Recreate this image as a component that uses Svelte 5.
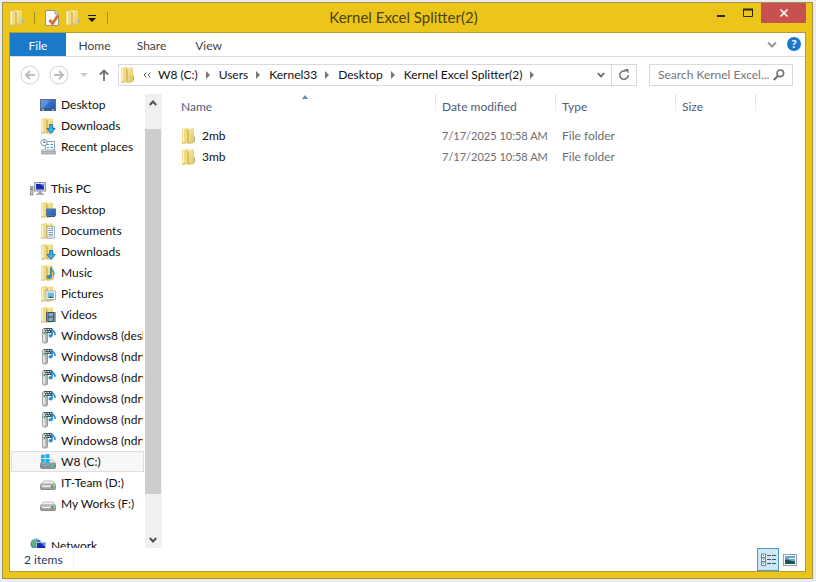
<script>
  const crumbs = ['W8 (C:)', 'Users', 'Kernel33', 'Desktop', 'Kernel Excel Splitter(2)'];
  const nav = [
    { label: 'Desktop', icon: 'screen' },
    { label: 'Downloads', icon: 'downloads' },
    { label: 'Recent places', icon: 'recent' },
    { gap: true },
    { label: 'This PC', icon: 'pc', top: true },
    { label: 'Desktop', icon: 'desktop' },
    { label: 'Documents', icon: 'documents' },
    { label: 'Downloads', icon: 'downloads' },
    { label: 'Music', icon: 'music' },
    { label: 'Pictures', icon: 'pictures' },
    { label: 'Videos', icon: 'videos' },
    { label: 'Windows8 (desk', icon: 'media' },
    { label: 'Windows8 (ndrw', icon: 'media' },
    { label: 'Windows8 (ndrw', icon: 'media' },
    { label: 'Windows8 (ndrw', icon: 'media' },
    { label: 'Windows8 (ndrw', icon: 'media' },
    { label: 'Windows8 (ndrw', icon: 'media' },
    { label: 'W8 (C:)', icon: 'system', selected: true },
    { label: 'IT-Team (D:)', icon: 'drive' },
    { label: 'My Works (F:)', icon: 'drive' },
    { gap: true },
    { label: 'Network', icon: 'network', top: true }
  ];
  const files = [
    { name: '2mb', date: '7/17/2025 10:58 AM', type: 'File folder' },
    { name: '3mb', date: '7/17/2025 10:58 AM', type: 'File folder' }
  ];
</script>

{#snippet folder()}
  <path d="M1 1 7 0v15l-6 .5z" fill="url(#f-left)" />
  <path d="M7 .5h6v7l1 1V13l-1 1.500-6 1z" fill="url(#f-right)" />
  <path d="M5.500 1.500 8 2.500V16l-2.500-1.500z" fill="#dcbf5c" />
  <path d="M5.500 1.500V14.500" stroke="#f3e08c" stroke-width=".8" />
  <path d="M2.500 2v12" stroke="#fff6c8" />
  <path d="M1 15.300 5.500 15M8 15.300l5-.8" stroke="#cdaf55" stroke-width=".7" />
  <path d="M13.500 9.500v3" stroke="#8bafb0" />
{/snippet}

{#snippet drive()}
  <path d="M3.500 6h9.500l2.500 3.500H.5z" fill="#f1f1f2" stroke="#a9abad" stroke-width=".7" />
  <rect x=".5" y="9" width="15" height="5.500" rx="1.500" fill="url(#metal)" stroke="#77797b" stroke-width=".8" />
  <path d="M3 11.500h7" stroke="#f5f5f5" />
  <path d="M12.500 10v3" stroke="#4ba24b" stroke-width="2" />
{/snippet}

{#snippet icon(name)}
  <svg class="icon" viewBox="0 0 16 16" aria-hidden="true">
    {#if name === 'folder'}
      {@render folder()}
    {:else if name === 'screen'}
      <rect x=".5" y="2.500" width="15" height="11" fill="url(#screen)" stroke="#5e7185" />
      <path d="M1 12.500h14" stroke="#234873" />
      <path d="M2 12.500h2M12 12.500h2" stroke="#9fd6f5" />
      <path d="M1 3h9L4 11H1z" fill="#79aef0" opacity=".45" />
    {:else if name === 'downloads'}
      {@render folder()}
      <path d="M9.500 6.500h3v4h2.700L11 15.500 6.800 10.500h2.700z" fill="#36b1ec" stroke="#1c76ad" stroke-width=".9" />
    {:else if name === 'desktop'}
      {@render folder()}
      <rect x="6.500" y="7" width="9" height="6.500" fill="url(#screen)" stroke="#5a7391" />
      <path d="M7 14.500h8" stroke="#31597f" />
    {:else if name === 'documents'}
      {@render folder()}
      <path d="M7 3.500h7.500v11.500H7z" fill="#fff" stroke="#8b9cab" stroke-width=".8" />
      <path d="M8.500 5.500h2M8.500 7.500h4.500M8.500 9.500h4.500M8.500 11.500h4.500M8.500 13h4.500" stroke="#6a8eb0" stroke-width=".9" />
      <path d="M11.500 5.500H13" stroke="#279fe0" stroke-width="2" />
    {:else if name === 'music'}
      {@render folder()}
      <path d="M11 2.500v9" stroke="#226b99" stroke-width="1.500" />
      <ellipse cx="9" cy="12" rx="2.600" ry="2" fill="#328bb9" />
      <path d="M11 2.500c0 3 4 3 3 7.500" fill="none" stroke="#3c9bcc" stroke-width="1.500" />
    {:else if name === 'pictures'}
      {@render folder()}
      <rect x="6" y="5" width="9.500" height="8.500" fill="#fff" stroke="#96a8af" stroke-width=".8" />
      <path d="M7.500 6.500h6.500v5.500H7.500z" fill="#68bce1" />
      <path d="m7.500 12 3-2 3.500 2z" fill="#377b6e" />
    {:else if name === 'videos'}
      {@render folder()}
      <rect x="6" y="5" width="9.500" height="10" fill="#3b464f" />
      <path d="M8.500 6h4.500v3.500H8.500zM8.500 10.500h4.500V14H8.500z" fill="#7aaed0" />
      <path d="M7.200 5.500V15M14.300 5.500V15" stroke="#f0f0e8" stroke-dasharray="1 1" />
    {:else if name === 'recent'}
      <path d="M6 2.500h8.500V11H5z" fill="#f8fbfc" stroke="#8c9da7" />
      <path d="M7 5.500h2M10.500 5.500H13M7 8.500h2M10.500 8.500H13" stroke="#499bc2" />
      <path d="m3 10-1.500 2.500v2.500h14v-2.500L14 10v2.500H3z" fill="#b7c0c6" stroke="#8b969d" stroke-width=".7" />
      <circle cx="4" cy="3.500" r="3.200" fill="#f8fafb" stroke="#8899a4" />
      <path d="M4 1.500v2h1.500" fill="none" stroke="#466679" />
    {:else if name === 'pc'}
      <rect x="4.500" y="1.500" width="11" height="8.500" fill="#d6d9df" stroke="#9296a3" />
      <path d="M6 3h8v5.500H6z" fill="#142bbb" />
      <path d="M10 3h4v3z" fill="#5b83f0" />
      <path d="M8 10h4v2.500h2v1.500H6v-1.500h2z" fill="#a9adb1" />
      <rect x=".5" y="5.500" width="2.500" height="8.500" fill="#c7c9cc" stroke="#85888c" stroke-width=".8" />
      <path d="M1.800 7v2" stroke="#337a46" />
    {:else if name === 'network'}
      <circle cx="6" cy="6" r="5.500" fill="#3385ca" />
      <path d="M1 4c2 0 2-3 5-3l1 2-2 2 1 2-2 3-2-3z" fill="#65b875" />
      <path d="M3 1.500c2-1 4-1 6 0" fill="none" stroke="#b9e5f2" />
      <rect x="6.500" y="4.500" width="9" height="7" fill="#172cb2" stroke="#b7bfd4" />
      <path d="M11 5h4v4z" fill="#5986e7" />
      <path d="M9 13h4" stroke="#989fad" stroke-width="2" />
    {:else if name === 'media'}
      <rect x="2.500" y=".5" width="5" height="14.500" rx="1.500" fill="url(#tower)" stroke="#8b8e90" stroke-width=".8" />
      <path d="M4 7v6" stroke="#f7f7f7" />
      <path d="M4.500 4v2" stroke="#4b994e" stroke-width="1.500" />
      <path d="M4 0h8v5H6z" fill="#3b5361" />
      <path d="M5 1.500h6M6 3.500h5" stroke="#d3edf5" stroke-dasharray="1.500 1" />
      <path d="M12 .5v7" stroke="#2a83bd" stroke-width="1.600" />
      <ellipse cx="10.600" cy="7.800" rx="2.100" ry="1.700" fill="#2b93d2" />
      <path d="M12.500 1.500c0 2 3.500 2 2.300 5.500" fill="none" stroke="#2590d4" stroke-width="1.600" />
    {:else if name === 'drive'}
      {@render drive()}
    {:else if name === 'system'}
      {@render drive()}
      <path d="M.5 9.500h15v4H.5z" fill="#527f9b" opacity=".65" />
      <path d="M12.500 10v3" stroke="#61cf69" stroke-width="2" />
      <path d="m1 .8 3.700-.4v3.800H1zM5.500.3 9.500 0v4.200h-4zM1 5h3.700v3.800L1 8.400zM5.500 5h4v4.300l-4-.4z" fill="#20aee5" />
    {/if}
  </svg>
{/snippet}

<svg class="defs" width="0" height="0" aria-hidden="true">
  <defs>
    <linearGradient id="f-left"><stop stop-color="#f3e093" /><stop offset="1" stop-color="#ebd47c" /></linearGradient>
    <linearGradient id="f-right" x2="1" y2="1"><stop stop-color="#f8eaa6" /><stop offset="1" stop-color="#dfc158" /></linearGradient>
    <linearGradient id="metal" x2="0" y2="1"><stop stop-color="#e2e3e4" /><stop offset="1" stop-color="#8d9194" /></linearGradient>
    <linearGradient id="tower" x2="1" y2="0"><stop stop-color="#e4e5e6" /><stop offset="1" stop-color="#a2a5a8" /></linearGradient>
    <linearGradient id="screen" x2="1" y2="1"><stop stop-color="#4f8bdb" /><stop offset="1" stop-color="#1e50a9" /></linearGradient>
  </defs>
</svg>

<div class="page">
  <div class="window">
    <header class="titlebar">
      <div class="quick">
        {@render icon('folder')}
        <i class="bar"></i>
        <button aria-label="Properties">
          <svg class="icon" viewBox="0 0 16 16">
            <path d="M1.500.5H11L14.500 4v11.500h-13z" fill="#fbfbfb" stroke="#999579" />
            <path d="M11 .5V4h3.500" fill="#ddd" stroke="#999579" />
            <path d="m5.500 10 3 3.500L14 5.500" fill="none" stroke="#dc6940" stroke-width="2.800" />
          </svg>
        </button>
        <button aria-label="New folder">{@render icon('folder')}</button>
        <button class="more" aria-label="Customize Quick Access Toolbar">
          <svg width="8" height="8" viewBox="0 0 8 8"><path d="M0 1h8v1H0z" fill="#111" /><path d="M0 4h8L4 8z" fill="#111" /></svg>
        </button>
        <i class="bar"></i>
      </div>
      <h1>Kernel Excel Splitter(2)</h1>
      <div class="controls">
        <button aria-label="Minimize"><svg width="12" height="12" viewBox="0 0 12 12"><path d="M2 8h8v2H2z" fill="#2b2508" /></svg></button>
        <button aria-label="Maximize"><svg width="12" height="12" viewBox="0 0 12 12"><path d="M1.500 2.500h9v7h-9z" fill="none" stroke="#2b2508" /><path d="M1 2.500h10" stroke="#2b2508" stroke-width="2" /></svg></button>
        <button class="close" aria-label="Close"><svg width="10" height="10" viewBox="0 0 10 10"><path d="m1.500 1.500 7 7m0-7-7 7" stroke="#fff" stroke-width="1.700" /></svg></button>
      </div>
    </header>

    <div class="client">
      <nav class="tabs" aria-label="Ribbon">
        <button class="file">File</button>
        <button>Home</button>
        <button>Share</button>
        <button>View</button>
        <span class="fill"></span>
        <button class="plain" aria-label="Expand the Ribbon"><svg width="10" height="8" viewBox="0 0 10 8"><path d="m1 1.500 4 4 4-4" fill="none" stroke="#999" stroke-width="2" /></svg></button>
        <button class="plain help" aria-label="Help">?</button>
      </nav>

      <div class="addressbar">
        <div class="history">
          <button aria-label="Back"><svg width="20" height="20" viewBox="0 0 20 20"><circle cx="10" cy="10" r="9" fill="none" stroke="#cfcfcf" /><path d="M15 10H6m4-4-4 4 4 4" fill="none" stroke="#bcbcbc" stroke-width="2" /></svg></button>
          <button aria-label="Forward"><svg width="20" height="20" viewBox="0 0 20 20"><circle cx="10" cy="10" r="9" fill="none" stroke="#cfcfcf" /><path d="M5 10h9m-4-4 4 4-4 4" fill="none" stroke="#bcbcbc" stroke-width="2" /></svg></button>
          <button class="recent" aria-label="Recent locations"><svg width="8" height="4" viewBox="0 0 8 4"><path d="M0 0h8L4 4z" fill="#ccc" /></svg></button>
          <button aria-label="Up"><svg width="10" height="12" viewBox="0 0 10 12"><path d="M5 12V2M1 5.500l4-4 4 4" fill="none" stroke="#6e6e6e" stroke-width="1.800" /></svg></button>
        </div>
        <div class="path">
          {@render icon('folder')}
          <button class="chev" aria-label="Parent folders"><svg width="8" height="6" viewBox="0 0 8 6"><path d="M3.500.5 1 3l2.500 2.500M7.500.5 5 3l2.500 2.500" fill="none" stroke="#666" /></svg></button>
          {#each crumbs as crumb}
            <a href="#path">{crumb}</a>
            <svg class="sep" width="4" height="8" viewBox="0 0 4 8"><path d="M0 0v8l4-4z" fill="#777" /></svg>
          {/each}
          <span class="fill"></span>
          <button class="drop" aria-label="Previous locations"><svg width="8" height="7" viewBox="0 0 8 7"><path d="m.8 1 3.200 3.500L7.200 1" fill="none" stroke="#666" stroke-width="1.800" /></svg></button>
          <button class="refresh" aria-label="Refresh"><svg width="12" height="12" viewBox="0 0 12 12"><path d="M7.500 2.200A4.200 4.200 0 1 0 10.200 6" fill="none" stroke="#777" stroke-width="1.600" /><path d="M6 0h4.500v4.500z" fill="#777" /></svg></button>
        </div>
        <label class="search">
          <input type="text" placeholder="Search Kernel Excel..." aria-label="Search Kernel Excel Splitter(2)" />
          <svg width="12" height="12" viewBox="0 0 12 12"><circle cx="7.300" cy="4.300" r="3.300" fill="none" stroke="#6d6d6d" stroke-width="1.600" /><path d="M5 6.800.8 11" stroke="#6d6d6d" stroke-width="2" /></svg>
        </label>
      </div>

      <div class="body">
        <aside>
          <nav class="tree" aria-label="Navigation pane">
            {#each nav as item}
              {#if item.gap}
                <div class="gap"></div>
              {:else}
                <a href="#item" class:top={item.top} class:selected={item.selected}>
                  {@render icon(item.icon)}<span>{item.label}</span>
                </a>
              {/if}
            {/each}
          </nav>
          <div class="scroll">
            <button aria-label="Scroll up"><svg width="8" height="6" viewBox="0 0 8 6"><path d="m.8 5 3.200-3.500L7.200 5" fill="none" stroke="#505050" stroke-width="1.900" /></svg></button>
            <div class="track"><div class="thumb"></div></div>
            <button aria-label="Scroll down"><svg width="8" height="6" viewBox="0 0 8 6"><path d="m.8 1 3.200 3.500L7.200 1" fill="none" stroke="#505050" stroke-width="1.900" /></svg></button>
          </div>
        </aside>

        <main>
          <table>
            <colgroup><col class="c-name" /><col class="c-col" /><col class="c-col" /><col class="c-size" /><col /></colgroup>
            <thead>
              <tr>
                <th class="sorted" aria-sort="ascending">Name<svg width="6" height="4" viewBox="0 0 6 4"><path d="M0 4h6L3 0z" fill="#5c8fae" /></svg></th>
                <th>Date modified</th><th>Type</th><th>Size</th><td></td>
              </tr>
            </thead>
            <tbody>
              {#each files as f}
                <tr>
                  <td><a href="#file">{@render icon('folder')}{f.name}</a></td>
                  <td class="date">{f.date}</td><td>{f.type}</td><td></td><td></td>
                </tr>
              {/each}
            </tbody>
          </table>
        </main>
      </div>

      <footer>
        <span class="count">2 items</span>
        <span class="fill"></span>
        <button class="on" aria-label="Details view"><svg width="16" height="14" viewBox="0 0 16 14">
          {#each [0, 4, 8] as y}
            <rect x="1.500" y={y + 1} width="4" height="3.500" fill="#fff" stroke="#76838b" />
            <path d="M3 {y + 2.700}h1" stroke="#267bb0" />
            <path d="M7 {y + 2.500}h4m1 0h4" stroke="#49545c" />
          {/each}
        </svg></button>
        <button aria-label="Large icons view"><svg width="14" height="12" viewBox="0 0 14 12"><rect x=".5" y=".5" width="13" height="11" fill="#fff" stroke="#959daa" /><path d="M2 2h10v8H2z" fill="#69a6cc" /><path d="M2 6c3-2 6 2 10 1v3H2z" fill="#1e5356" /><path d="M6 4.500h6" stroke="#e6f5f8" /></svg></button>
      </footer>
    </div>
  </div>
</div>

<style>
  :global(body) { margin: 0; background: #e9edf0; }
  .page, .page * { box-sizing: border-box; }
  .page {
    height: 100vh;
    padding: 2px 3px 3px 2px;
    display: flex;
    font: 12px/20px Lato, "Open Sans", sans-serif;
    color: #111;
  }
  .defs { position: absolute; }
  button { border: 0; padding: 0; background: none; font: inherit; color: inherit; display: flex; align-items: center; justify-content: center; }
  a { color: inherit; text-decoration: none; }
  svg { display: block; flex: none; }
  .icon { width: 16px; height: 16px; }
  .fill { flex: 1; }

  .window { flex: 1; min-width: 0; display: flex; flex-direction: column; background: #ecc51b; border: 1px solid #a5924a; padding: 0 6px 6px; }
  .titlebar { display: grid; grid-template-columns: 1fr auto 1fr; height: 29px; flex: none; }
  .quick { display: flex; align-items: center; gap: 5px; }
  .bar { width: 1px; height: 12px; margin: 0 4px; background: #a78c1d; }
  .more { width: 12px; }
  h1 { margin: 0; padding-right: 8px; font-size: 15px; font-weight: 400; line-height: 29px; color: #4b3f0b; }
  .controls { display: flex; justify-content: flex-end; align-items: flex-start; }
  .controls button { width: 27px; height: 20px; }
  .controls .close { width: 45px; background: #c75050; }

  .client { flex: 1; min-height: 0; display: flex; flex-direction: column; background: #fff; border: 1px solid #b39a38; }
  .tabs { display: flex; height: 24px; flex: none; border-bottom: 1px solid #dadbdc; color: #3f3f3f; }
  .tabs button { width: 57px; padding-top: 2px; }
  .tabs .file { width: 56px; background: #1979ca; color: #fff; }
  .tabs .plain { width: 20px; padding: 0; }
  .tabs .help { width: 14px; height: 14px; margin: 4px 4px 0 5px; border-radius: 50%; background: #1979ca; color: #fff; font-weight: 700; }

  .addressbar { display: flex; align-items: center; height: 36px; flex: none; padding: 0 12px 0 10px; }
  .history { display: flex; align-items: center; width: 98px; gap: 9px; }
  .recent { width: 12px; }
  .path { flex: 1; display: flex; align-items: center; height: 22px; border: 1px solid #d9d9d9; padding-left: 1px; min-width: 0; white-space: nowrap; }
  .chev { width: 22px; }
  .sep { margin: 0 9px 0 8px; }
  .drop { width: 20px; }
  .refresh { width: 25px; height: 20px; border-left: 1px solid #d9d9d9; }
  .search { display: flex; align-items: center; width: 144px; height: 22px; margin-left: 12px; border: 1px solid #d9d9d9; padding: 0 7px 0 8px; }
  .search input { flex: 1; min-width: 0; border: 0; padding: 0; outline: 0; background: none; font: inherit; }
  .search input::placeholder { color: #757575; opacity: 1; }

  .body { flex: 1; min-height: 0; display: flex; padding-top: 1px; }
  aside { display: flex; width: 152px; flex: none; border-right: 1px solid #f3f3f3; }
  .tree { flex: 1; min-width: 0; overflow: hidden; padding-left: 1px; }
  .tree a { display: flex; align-items: center; gap: 5px; height: 21px; padding-left: 28px; border: 1px solid transparent; overflow: hidden; white-space: nowrap; }
  .tree .top { padding-left: 18px; }
  .tree .selected { background: #f7f7f7; border-color: #dedede; }
  .gap { height: 21px; }
  .scroll { display: flex; flex-direction: column; width: 17px; border-left: 1px solid #fff; background: #f0f0f0; }
  .scroll button { height: 17px; width: 16px; }
  .track { flex: 1; padding: 18px 0 37px; }
  .thumb { height: 100%; background: #cdcdcd; }

  main { flex: 1; min-width: 0; padding-left: 12px; }
  table { width: 100%; table-layout: fixed; border-collapse: collapse; }
  .c-name { width: 262px; }
  .c-col { width: 120px; }
  .c-size { width: 80px; }
  th, td { height: 21px; padding: 0 0 0 6px; text-align: left; font-weight: 400; line-height: 20px; white-space: nowrap; color: #6d6d6d; }
  th:first-child, td:first-child { padding-left: 7px; }
  thead th { height: 26px; color: #4c607a; background: linear-gradient(#d5e3f0, #f4f8fb) right top / 1px 21px no-repeat; }
  .sorted { position: relative; }
  .sorted svg { position: absolute; top: 1px; left: calc(50% - 3px); }
  tbody::before { content: ""; display: block; height: 5px; }
  .date { font-size: 11px; }
  tbody a { display: flex; align-items: center; gap: 5px; color: #111; }

  footer { display: flex; align-items: center; height: 23px; flex: none; padding: 0 4px 0 14px; color: #1e395b; }
  .count { padding-right: 10px; border-right: 1px solid #f1f1f1; }
  footer button { width: 22px; height: 23px; }
  footer .on { background: #cce8f6; border: 1px solid #4b9fc4; }
</style>
